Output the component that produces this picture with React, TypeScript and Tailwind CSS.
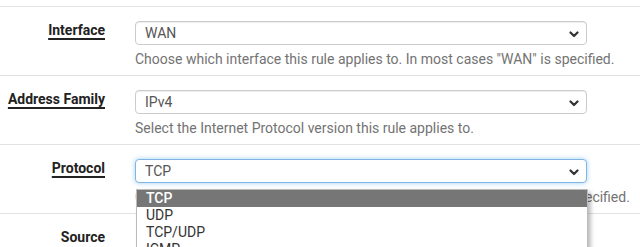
import React from "react";

const rows = [
  {
    label: "Interface",
    value: "WAN",
    help: 'Choose which interface this rule applies to. In most cases "WAN" is specified.',
  },
  {
    label: "Address Family",
    value: "IPv4",
    help: "Select the Internet Protocol version this rule applies to.",
  },
  {
    label: "Protocol",
    value: "TCP",
    help: 'Choose which protocol this rule should match. In most cases "TCP" is specified.',
    open: true,
  },
];

const options = ["TCP", "UDP", "TCP/UDP", "ICMP"];

const Chevron = () => (
  <svg width="10" height="7" viewBox="0 0 10 7" className="absolute right-[7px] top-[9px]">
    <path d="M1.5 1.5 L5 5 L8.5 1.5" fill="none" stroke="#333" strokeWidth="2.2" strokeLinecap="round" strokeLinejoin="round" />
  </svg>
);

const App = () => {
  return (
    <div className="w-[640px] h-[247px] overflow-hidden bg-white pt-[6px] font-['Roboto',sans-serif]">
      {rows.map((row) => (
        <div key={row.label} className="flex h-[69px] border-t border-[#e2e2e2]">
          {/* label column */}
          <div className="w-[105px] shrink-0 flex justify-end pt-[14px]">
            <span className="text-[14px] font-bold text-[#222] leading-[18px] underline underline-offset-[3px] decoration-[1.5px]">
              {row.label}
            </span>
          </div>
          {/* field column */}
          <div className="relative pl-[30px] pt-[14px]">
            <div
              className={`relative w-[452px] h-[24px] rounded-[4px] border bg-white pl-[9px] text-[14px] leading-[22px] text-[#555] ${
                row.open
                  ? "border-[#7fb6e6] shadow-[0_0_5px_rgba(102,175,233,0.6)]"
                  : "border-[#ccc] shadow-[inset_0_1px_1px_rgba(0,0,0,0.075)]"
              }`}
            >
              {row.value}
              <Chevron />
            </div>
            <div className="mt-[4px] text-[14px] leading-[20px] text-[#737373] whitespace-nowrap">{row.help}</div>
            {row.open && (
              <div className="absolute left-[31px] top-[44px] w-[452px] bg-white border border-[#bbb] shadow-[3px_3px_4px_rgba(0,0,0,0.25)] z-10">
                {options.map((opt, i) => (
                  <div
                    key={opt}
                    className={`h-[17px] pl-[9px] text-[14px] leading-[17px] ${
                      i === 0 ? "bg-[#767676] text-white font-medium" : "text-[#333]"
                    }`}
                  >
                    {opt}
                  </div>
                ))}
              </div>
            )}
          </div>
        </div>
      ))}
      <div className="flex border-t border-[#e2e2e2]">
        <div className="w-[105px] shrink-0 flex justify-end pt-[14px]">
          <span className="text-[14px] font-bold text-[#222] leading-[18px]">Source</span>
        </div>
      </div>
    </div>
  );
};

export default App;
